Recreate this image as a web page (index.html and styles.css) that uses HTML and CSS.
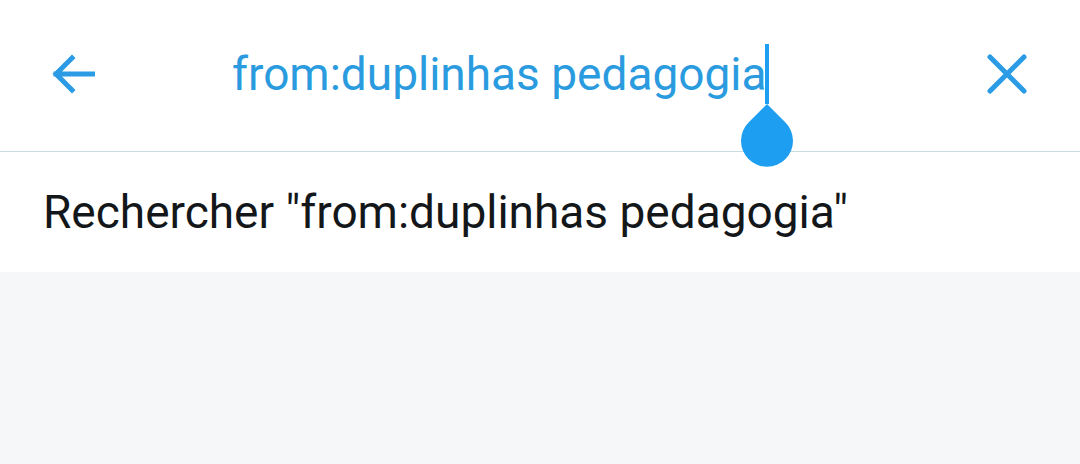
FILE: index.html
```html
<!DOCTYPE html>
<html>
<head>
<meta charset="utf-8">
<link rel="stylesheet" href="styles.css">
</head>
<body>
<div class="page">
  <header class="bar">
    <div class="icon back">
      <svg width="44" height="44" viewBox="0 0 44 44"><path d="M42 22H5M21 6L5 22l16 16" fill="none" stroke="#2a9be4" stroke-width="5" stroke-linecap="square"/></svg>
    </div>
    <div class="query">
      <span class="qtext">from:duplinhas pedagogia</span><span class="caret"><svg class="handle" width="54" height="66" viewBox="0 0 54 66"><path d="M27 0 L45 18 A26 26 0 1 1 9 18 Z" fill="#1e9ef0"/></svg></span>
    </div>
    <div class="icon close">
      <svg width="40" height="40" viewBox="0 0 40 40"><path d="M3 3L37 37M37 3L3 37" fill="none" stroke="#2a9be4" stroke-width="5" stroke-linecap="round"/></svg>
    </div>
  </header>
  <div class="suggest">Rechercher "from:duplinhas pedagogia"</div>
  <div class="rest"></div>
</div>
</body>
</html>
```
FILE: styles.css
```css
html, body { margin: 0; padding: 0; }
body { width: 1080px; height: 464px; overflow: hidden; font-family: Roboto, "Noto Sans", sans-serif; background: #fff; }
.page { display: flex; flex-direction: column; height: 464px; }
.bar { height: 151px; border-bottom: 1px solid #c9dde0; display: flex; align-items: center; padding: 0 0 0 51px; box-sizing: content-box; }
.icon { display: flex; align-items: center; justify-content: center; }
.back { width: 44px; height: 44px; margin-top: -4px; }
.query { flex: 1; padding-left: 137px; display: flex; align-items: center; margin-top: -3px; }
.qtext { font-size: 46px; color: #2b9be0; line-height: 60px; }
.caret { position: relative; width: 4px; height: 60px; background: #1e9ef0; margin-left: -2px; }
.handle { position: absolute; left: -25px; top: 60px; }
.close { width: 40px; height: 40px; margin-right: 53px; margin-top: -4px; }
.suggest { height: 120px; display: flex; align-items: center; padding-left: 43px; font-size: 46px; color: #14171a; }
.rest { flex: 1; background: #f5f7f9; }
```
